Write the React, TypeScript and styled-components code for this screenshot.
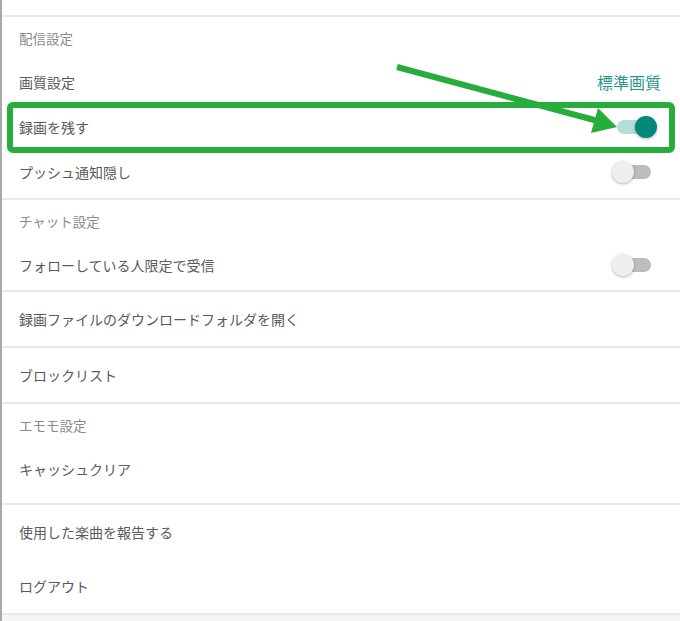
import React from 'react';
import styled, { createGlobalStyle } from 'styled-components';

const GlobalStyle = createGlobalStyle`
  body {
    margin: 0;
    background: #fff;
    font-family: "Noto Sans CJK JP", "Noto Sans", sans-serif;
  }
`;

type Row = { label: string; value?: string; toggle?: boolean };
type Group = { title?: string; rows: Row[]; pad?: number; rowH: number };

const groups: Group[] = [
  {
    title: '配信設定',
    pad: 4,
    rowH: 45,
    rows: [
      { label: '画質設定', value: '標準画質' },
      { label: '録画を残す', toggle: true },
      { label: 'プッシュ通知隠し', toggle: false },
    ],
  },
  {
    title: 'チャット設定',
    pad: 3,
    rowH: 45,
    rows: [{ label: 'フォローしている人限定で受信', toggle: false }],
  },
  { rowH: 54, rows: [{ label: '録画ファイルのダウンロードフォルダを開く' }] },
  { rowH: 54, rows: [{ label: 'ブロックリスト' }] },
  {
    title: 'エモモ設定',
    pad: 11,
    rowH: 46,
    rows: [{ label: 'キャッシュクリア' }],
  },
  {
    rowH: 54,
    rows: [{ label: '使用した楽曲を報告する' }, { label: 'ログアウト' }],
  },
];

const Switch = ({ on }: { on: boolean }) => (
  <SwitchWrap>
    <Track $on={on} />
    <Thumb $on={on} />
  </SwitchWrap>
);

const Annotation = () => (
  <Overlay width="680" height="621" viewBox="0 0 680 621">
    <rect
      x="10"
      y="105"
      width="662"
      height="45"
      rx="3"
      fill="none"
      stroke="#27ad3b"
      strokeWidth="6"
    />
    <line x1="397" y1="67" x2="598" y2="121" stroke="#27ad3b" strokeWidth="6" />
    <polygon points="617,127 591,133 598,108" fill="#27ad3b" />
  </Overlay>
);

const App = () => {
  return (
    <>
      <GlobalStyle />
      <Page>
        <TopGap />
        {groups.map((g, i) => (
          <Section key={i} $pad={g.pad || 0}>
            {g.title && <Header>{g.title}</Header>}
            {g.rows.map((r) => (
              <Item key={r.label} $h={g.rowH}>
                <Label>{r.label}</Label>
                {r.value && <Value>{r.value}</Value>}
                {r.toggle !== undefined && <Switch on={r.toggle} />}
              </Item>
            ))}
          </Section>
        ))}
        <Footer />
        <Annotation />
      </Page>
    </>
  );
};

const Page = styled.div`
  position: relative;
  width: 680px;
  height: 621px;
  box-sizing: border-box;
  border-left: 2px solid #a9a9a9;
  display: flex;
  flex-direction: column;
  overflow: hidden;
`;

const TopGap = styled.div`
  height: 15px;
  flex-shrink: 0;
  border-bottom: 2px solid #e9e9e9;
`;

const Section = styled.div<{ $pad: number }>`
  display: flex;
  flex-direction: column;
  flex-shrink: 0;
  padding-bottom: ${(p) => p.$pad}px;
  border-bottom: 2px solid #e9e9e9;

  &:last-of-type {
    border-bottom: none;
  }
`;

const Header = styled.div`
  height: 42px;
  display: flex;
  align-items: center;
  padding-left: 17px;
  font-size: 13.5px;
  color: #8a8a8a;
`;

const Item = styled.div<{ $h: number }>`
  height: ${(p) => p.$h}px;
  display: flex;
  align-items: center;
  justify-content: space-between;
  padding: 0 19px 0 17px;
`;

const Label = styled.span`
  font-size: 14px;
  color: #5a5a5a;
`;

const Value = styled.span`
  font-size: 16px;
  color: #2a968b;
`;

const SwitchWrap = styled.div`
  position: relative;
  width: 46px;
  height: 22px;
  margin-right: 3px;
`;

const Track = styled.div<{ $on: boolean }>`
  position: absolute;
  left: 5px;
  top: 4px;
  width: 34px;
  height: 14px;
  border-radius: 7px;
  background: ${(p) => (p.$on ? '#b4dcd8' : '#bdbdbd')};
`;

const Thumb = styled.div<{ $on: boolean }>`
  position: absolute;
  top: 0;
  left: ${(p) => (p.$on ? 23 : 0)}px;
  width: 22px;
  height: 22px;
  border-radius: 50%;
  background: ${(p) => (p.$on ? '#00897b' : '#efefef')};
  box-shadow: 0 1px 3px rgba(0, 0, 0, 0.3);
`;

const Footer = styled.div`
  flex: 1;
  background: #f5f5f5;
`;

const Overlay = styled.svg`
  position: absolute;
  left: -2px;
  top: 0;
  pointer-events: none;
`;

export default App;
